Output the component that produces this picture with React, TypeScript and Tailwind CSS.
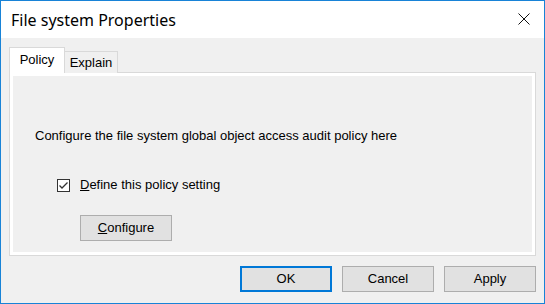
import React from "react";

const font = { fontFamily: '"Liberation Sans", Arial, sans-serif' };

function DialogButton({ children, primary }: { children: React.ReactNode; primary?: boolean }) {
  return (
    <button
      className={
        primary
          ? "w-[92px] h-[26px] bg-[#e1e1e1] border-2 border-[#0078d7] text-[13px] text-black flex items-center justify-center"
          : "w-[92px] h-[26px] bg-[#e1e1e1] border border-[#adadad] text-[13px] text-black flex items-center justify-center"
      }
    >
      {children}
    </button>
  );
}

export default function App() {
  return (
    <div
      className="w-[545px] h-[304px] border border-[#1883d7] bg-[#f0f0f0] flex flex-col overflow-hidden"
      style={font}
    >
      {/* title bar */}
      <div className="h-[37px] bg-white flex items-center justify-between pl-[10px] pr-[14px] shrink-0">
        <span className="text-[16px] text-black" style={{ fontFamily: '"Noto Sans", "Open Sans", sans-serif' }}>
          File system Properties
        </span>
        <svg width="12" height="12" viewBox="0 0 12 12" className="mb-[1px]">
          <path d="M0.5 0.5 L11.5 11.5 M11.5 0.5 L0.5 11.5" stroke="#111" strokeWidth="1" fill="none" />
        </svg>
      </div>

      <div className="flex-1 flex flex-col px-[8px] pt-[10px]">
        {/* tabs */}
        <div className="flex items-end h-[25px] relative z-10 -mb-px">
          <div className="w-[56px] h-[26px] bg-white border border-b-0 border-[#d9d9d9] flex items-center justify-center pb-[2px] text-[13px] text-black">
            Policy
          </div>
          <div className="w-[53px] h-[22px] bg-[#f0f0f0] border border-l-0 border-b-0 border-[#d9d9d9] flex items-center justify-center pt-[1px] text-[13px] text-black">
            Explain
          </div>
        </div>

        {/* tab page */}
        <div className="h-[184px] border border-[#d9d9d9] bg-white p-[3px] flex">
          <div className="flex-1 bg-[#f0f0f0] flex flex-col pl-[22px] pt-[52px]">
            <div className="text-[13px] leading-[16px] text-black">
              Configure the file system global object access audit policy here
            </div>
            <div className="flex items-center gap-[10px] mt-[33px] ml-[22px] h-[16px]">
              <div className="w-[13px] h-[13px] border border-[#333] bg-white flex items-center justify-center">
                <svg width="11" height="11" viewBox="0 0 11 11">
                  <path d="M1.5 5.5 L4 8 L9.5 2.5" stroke="#333" strokeWidth="1.3" fill="none" />
                </svg>
              </div>
              <span className="text-[13px] text-black">
                <span className="underline">D</span>efine this policy setting
              </span>
            </div>
            <div className="ml-[45px] mt-[22px]">
              <button className="w-[92px] h-[26px] bg-[#e1e1e1] border border-[#adadad] text-[13px] text-black flex items-center justify-center">
                <span>
                  <span className="underline">C</span>onfigure
                </span>
              </button>
            </div>
          </div>
        </div>

        {/* footer buttons */}
        <div className="flex justify-end gap-[10px] mt-[10px]">
          <DialogButton primary>OK</DialogButton>
          <DialogButton>Cancel</DialogButton>
          <DialogButton>Apply</DialogButton>
        </div>
      </div>
    </div>
  );
}
